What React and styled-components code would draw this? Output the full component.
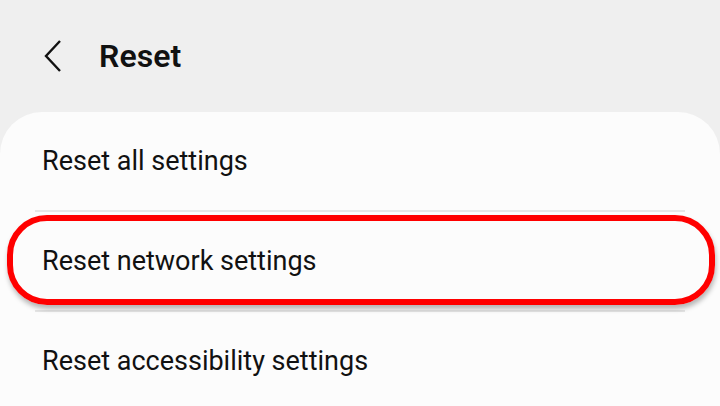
import React from 'react';
import styled, { createGlobalStyle } from 'styled-components';

const GlobalStyle = createGlobalStyle`
  html, body {
    margin: 0;
    padding: 0;
    background: #efefef;
    font-family: Roboto, "Liberation Sans", sans-serif;
    overflow: hidden;
  }
`;

const Screen = styled.div`
  width: 720px;
  height: 406px;
  background: #efefef;
  display: flex;
  flex-direction: column;
  overflow: hidden;
`;

const Header = styled.div`
  height: 112px;
  flex-shrink: 0;
  display: flex;
  align-items: center;
  padding: 0 0 0 43px;
  box-sizing: border-box;
`;

const BackButton = styled.div`
  width: 22px;
  height: 34px;
  display: flex;
  align-items: center;
`;

const Title = styled.h1`
  margin: 0 0 0 34px;
  font-size: 32px;
  font-weight: 600;
  color: #111;
  letter-spacing: 0.1px;
`;

const Card = styled.div`
  flex: 1;
  min-height: 0;
  background: #fcfcfc;
  border-radius: 42px 42px 0 0;
  display: flex;
  flex-direction: column;
`;

const Row = styled.div`
  position: relative;
  height: 98px;
  flex-shrink: 0;
  display: flex;
  align-items: center;
  padding-left: 42px;
  box-sizing: border-box;
  font-size: 27px;
  color: #111;
`;

const Divider = styled.div`
  height: 2px;
  flex-shrink: 0;
  margin: 0 35px;
  background: #e6e6e6;
`;

const Highlight = styled.div`
  position: absolute;
  left: 7px;
  right: 5px;
  top: 3px;
  bottom: 5px;
  border: 6px solid #ff0000;
  border-radius: 40px;
  box-shadow: 1px 4px 5px rgba(0, 0, 0, 0.28);
  pointer-events: none;
`;

const items = [
  { label: 'Reset all settings' },
  { label: 'Reset network settings', marked: true },
  { label: 'Reset accessibility settings' },
];

export default function App() {
  return (
    <Screen>
      <GlobalStyle />
      <Header>
        <BackButton>
          <svg width="20" height="34" viewBox="0 0 20 34">
            <path d="M17 2 L3 17 L17 32" fill="none" stroke="#111" strokeWidth="2.4" strokeLinejoin="miter" />
          </svg>
        </BackButton>
        <Title>Reset</Title>
      </Header>
      <Card>
        {items.map((item, i) => (
          <React.Fragment key={item.label}>
            {i > 0 && <Divider />}
            <Row>
              {item.label}
              {item.marked && <Highlight />}
            </Row>
          </React.Fragment>
        ))}
      </Card>
    </Screen>
  );
}
